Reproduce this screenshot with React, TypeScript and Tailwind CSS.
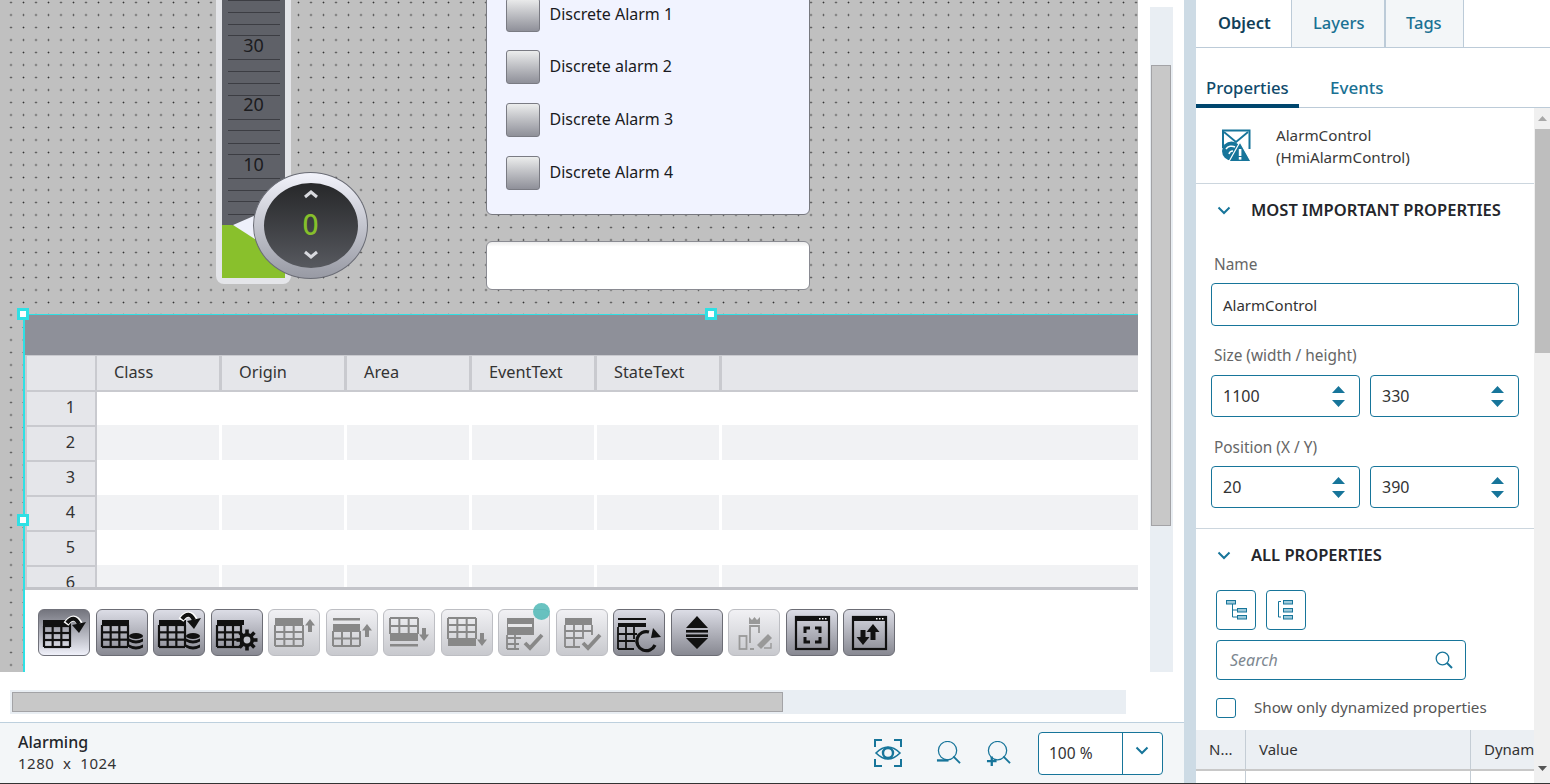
import React from "react";

const FONT = "font-['Noto_Sans','Open_Sans',sans-serif]";

function Grid({ x, y, w, h, bar, barH = 7, c = "currentColor", rows = 3, sw = 2 }: { x: number; y: number; w: number; h: number; bar?: number; barH?: number; c?: string; rows?: number; sw?: number }) {
  const lines: React.ReactNode[] = [];
  const top = y;
  for (let i = 0; i <= rows; i++) {
    const yy = top + (h * i) / rows;
    lines.push(<line key={"r" + i} x1={x} x2={x + w} y1={yy} y2={yy} stroke={c} strokeWidth={sw} />);
  }
  for (let i = 0; i <= 3; i++) {
    const xx = x + (w * i) / 3;
    lines.push(<line key={"c" + i} x1={xx} x2={xx} y1={y} y2={y + h} stroke={c} strokeWidth={sw} />);
  }
  return (
    <g>
      {lines}
      {bar !== undefined && <rect x={x} y={bar} width={w} height={barH} fill={c} />}
    </g>
  );
}

function Db({ x, y, c = "currentColor" }: { x: number; y: number; c?: string }) {
  return (
    <g fill={c}>
      <ellipse cx={x + 7} cy={y + 3} rx={7} ry={3} />
      <path d={`M${x} ${y + 5.5} q7 4 14 0 v3 q-7 4 -14 0z`} />
      <path d={`M${x} ${y + 11.5} q7 4 14 0 v3 q-7 4 -14 0z`} />
    </g>
  );
}

function Curve() {
  return (
    <g>
      <path d="M28 15 Q36 4 42 15" fill="none" stroke="#fff" strokeWidth="6" />
      <path d="M29 14 Q36 5 41 15" fill="none" stroke="#111" strokeWidth="4" />
      <path d="M34 16 L48 13 L41 24 Z" fill="#111" />
    </g>
  );
}

function Arrow({ x, y, up, len = 13, c = "#888" }: { x: number; y: number; up?: boolean; len?: number; c?: string }) {
  return up ? (
    <path d={`M${x} ${y} l5 6.500 h-3 v${len - 6.5} h-4 v-${len - 6.5} h-3 z`} fill={c} />
  ) : (
    <path d={`M${x} ${y + len} l5 -6.500 h-3 v-${len - 6.5} h-4 v${len - 6.5} h-3 z`} fill={c} />
  );
}

const Check = ({ x = 25, y = 28 }: { x?: number; y?: number }) => (
  <path d={`M${x} ${y + 6} l5 5 l12 -13`} fill="none" stroke="#888" strokeWidth="3.8" />
);

const icons: React.ReactNode[] = [
  <g key="0"><rect x="5" y="11" width="28" height="6" fill="#111" /><Grid x={6} y={17} w={26} h={21} c="#111" sw={2.2} /><Curve /></g>,
  <g key="1"><rect x="6" y="11" width="27" height="5" fill="#111" /><Grid x={6} y={16} w={26} h={22} c="#111" sw={2.2} /><Db x={33} y={24} c="#111" /></g>,
  <g key="2"><rect x="6" y="11" width="27" height="5" fill="#111" /><Grid x={6} y={16} w={26} h={22} c="#111" sw={2.2} /><g transform="translate(0 -4)"><Curve /></g><Db x={33} y={24} c="#111" /></g>,
  <g key="3">
    <rect x="6" y="11" width="27" height="5" fill="#111" /><Grid x={6} y={16} w={24} h={22} c="#111" sw={2.2} />
    <g transform="translate(36 31)">
      {[0, 45, 90, 135].map((a) => <rect key={a} x="-1.8" y="-10.5" width="3.6" height="21" fill="#111" transform={`rotate(${a})`} />)}
      <circle r="7" fill="#111" /><circle r="3.4" fill="#c0c1c9" />
    </g>
  </g>,
  <g key="4"><Grid x={7} y={16} w={28} h={21} c="#888" /><rect x="7" y="9" width="28" height="7" fill="#888" /><Arrow x={42} y={10} up /></g>,
  <g key="5"><rect x="7" y="9" width="27" height="2.500" fill="#888" /><Grid x={7} y={22} w={27} h={15} rows={2} c="#888" /><rect x="7" y="15" width="27" height="7" fill="#888" /><Arrow x={41} y={15} up /></g>,
  <g key="6"><Grid x={7} y={9} w={28} h={16} rows={2} c="#888" /><rect x="7" y="25" width="28" height="7" fill="#888" /><rect x="7" y="35" width="28" height="2.500" fill="#888" /><Arrow x={41} y={19} /></g>,
  <g key="7"><Grid x={7} y={9} w={28} h={21} c="#888" /><rect x="7" y="30" width="28" height="7" fill="#888" /><Arrow x={41} y={24} /></g>,
  <g key="8"><rect x="9" y="9" width="27" height="17" fill="#888" /><rect x="10" y="15" width="24" height="3" fill="#e8e8ea" /><path d="M9 29 H23 M9 35 H21 M9 40 H21 M9 26 V40 M17 26 V40" stroke="#888" strokeWidth="1.8" /><Check x={27} y={28} /></g>,
  <g key="9"><rect x="9" y="9" width="27" height="7" fill="#888" /><path d="M9 16 V38 M18 16 V38 M27 16 V30 M36 16 V26 M9 22 H36 M9 29 H26 M9 38 H24" stroke="#888" strokeWidth="1.8" /><Check x={27} y={28} /></g>,
  <g key="10"><rect x="5" y="9" width="28" height="2" fill="#111" /><rect x="5" y="14" width="28" height="4" fill="#111" /><path d="M5 18 V40 M13 18 V40 M21 18 V30 M5 25 H24 M5 32 H22 M5 40 H21" stroke="#111" strokeWidth="1.8" /><path d="M42 36 A 9.5 9.5 0 1 1 36 23" fill="none" stroke="#111" strokeWidth="3.2" /><path d="M38 20 L46 29 L36 30 Z" fill="#111" transform="translate(2 -1)" /></g>,
  <g key="11"><path d="M26 7 L37 19 H15 Z M26 40 L37 29 H15 Z" fill="#111" /><rect x="15" y="21" width="22" height="2.6" fill="#111" /><rect x="15" y="25.4" width="22" height="2.6" fill="#111" /></g>,
  <g key="12"><rect x="11.5" y="27" width="7" height="13" fill="none" stroke="#999" strokeWidth="1.8" /><path d="M22 34 V17 H31 V24 M22 40 H26" fill="none" stroke="#999" strokeWidth="1.8" /><path d="M21 15 V8 L24 11 L26.500 8 L29 11 L32 8 V15 Z" fill="#999" /><path d="M29 36 L40 25 L44 29 L33 40 Z" fill="#999" /><path d="M36 39 H43 V34" fill="none" stroke="#999" strokeWidth="1.4" /></g>,
  <g key="13"><rect x="10" y="8" width="33" height="32" fill="none" stroke="#111" strokeWidth="2.2" /><rect x="10" y="8" width="33" height="4" fill="#111" /><g fill="#fff"><rect x="33" y="9" width="1.5" height="1.5" /><rect x="36" y="9" width="1.500" height="1.5" /><rect x="39" y="9" width="1.5" height="1.5" /></g><path d="M19 24 V19 H24 M29 19 H34 V24 M34 28 V33 H29 M24 33 H19 V28" fill="none" stroke="#111" strokeWidth="3" /></g>,
  <g key="14"><rect x="10" y="8" width="33" height="32" fill="none" stroke="#111" strokeWidth="2.2" /><rect x="10" y="8" width="33" height="4" fill="#111" /><g fill="#fff"><rect x="33" y="9" width="1.5" height="1.5" /><rect x="36" y="9" width="1.5" height="1.5" /><rect x="39" y="9" width="1.5" height="1.5" /></g><path d="M30 15 l6.500 8 h-4 v8 h-5 v-8 h-4 z" fill="#111" /><path d="M20 36 l-6.500 -8 h4 v-7 h5 v7 h4 z" fill="#111" /></g>,
];

const kinds = ["active", "dark", "dark", "dark", "off", "off", "off", "off", "off", "off", "dark", "dark", "off", "dark", "dark"];

function ToolButton({ kind, children }: { kind: string; children: React.ReactNode }) {
  const cls =
    kind === "active"
      ? "bg-linear-to-b from-[#74757e] to-[#f0f1fa] border-[#70717a]"
      : kind === "dark"
        ? "bg-linear-to-b from-[#dcdde6] to-[#888992] border-[#6c6d75]"
        : "bg-linear-to-b from-[#f1f1f4] to-[#c8c9ce] border-[#bdbec3]";
  return (
    <div className={`w-[52px] h-[47px] shrink-0 rounded-[6px] border ${cls}`}>
      <svg width="50" height="45" viewBox="1 1 50 45">{children}</svg>
    </div>
  );
}

const HEAD = "h-full flex items-center pb-[1px] border-r-[3px] border-[#c9cacf] bg-[#e5e6ea] text-[16.3px] text-[#333] pl-[17px] w-[125px] shrink-0";

function Row({ n, shade, h }: { n: number; shade: boolean; h: string }) {
  return (
    <div className={`flex shrink-0 ${h} bg-white`}>
      <div className={`w-[70px] shrink-0 flex items-center justify-end pr-[20px] pb-[3px] bg-[#e5e6ea] border-r-[2px] border-[#c9cacf] text-[16.3px] text-[#333] ${n > 1 ? "border-t-[2px]" : ""}`}>{n}</div>
      {[0, 1, 2, 3, 4].map((i) => (
        <div key={i} className={`w-[122px] shrink-0 mr-[3px] ${shade ? "bg-[#f1f2f4]" : "bg-white"}`} />
      ))}
      <div className={`flex-1 ${shade ? "bg-[#f1f2f4]" : "bg-white"}`} />
    </div>
  );
}

function AlarmControl() {
  return (
    <div className="absolute left-[23px] top-[314px] w-[1400px] h-[358px] border-l-2 border-t border-[#2fe0e4] bg-white flex flex-col">
      <div className="h-[40px] shrink-0 bg-[#8e9099]" />
      <div className="h-[232px] shrink-0 overflow-hidden border-l-[2px] border-[#c9cacf] border-t-[1px] flex flex-col">
        <div className="flex h-[36px] shrink-0 border-b-[2px] border-[#c9cacf] bg-[#e5e6ea]">
          <div className="w-[70px] shrink-0 border-r-[2px] border-[#c9cacf]" />
          {["Class", "Origin", "Area", "EventText", "StateText"].map((t) => (
            <div key={t} className={HEAD}>{t}</div>
          ))}
        </div>
        <Row n={1} shade={false} h="h-[33px]" />
        <Row n={2} shade h="h-[35px]" />
        <Row n={3} shade={false} h="h-[35px]" />
        <Row n={4} shade h="h-[35px]" />
        <Row n={5} shade={false} h="h-[35px]" />
        <Row n={6} shade h="h-[35px]" />
      </div>
      <div className="h-[3px] shrink-0 bg-[#c3c4c9]" />
      <div className="flex-1 flex items-start gap-[5.5px] pl-[13px] pt-[19px] bg-white">
        {icons.map((ic, i) => (
          <ToolButton key={i} kind={kinds[i]}>{ic}</ToolButton>
        ))}
      </div>
      <div className="absolute left-[-8px] top-[-7px] w-[12px] h-[12px] bg-white border-[3px] border-[#2fe0e4]" />
      <div className="absolute left-[680px] top-[-7px] w-[12px] h-[12px] bg-white border-[3px] border-[#2fe0e4]" />
      <div className="absolute left-[-8px] top-[199px] w-[12px] h-[12px] bg-white border-[3px] border-[#2fe0e4]" />
      <div className="absolute left-[508px] top-[288px] w-[17px] h-[17px] rounded-full bg-[#4fb9b6]/85" />
    </div>
  );
}

function Gauge() {
  const ticks = [0, 12, 24, 35, 59, 71, 83, 95, 119, 130, 143, 154, 178, 190, 201, 214];
  return (
    <>
      <div className="absolute left-[216px] top-[-10px] w-[75px] h-[294px] border-[6px] border-[#e4e5e9] rounded-b-[8px] bg-[#5f6168]">
        <svg className="absolute inset-0" width="63" height="282" viewBox="222 -4 63 282">
          {ticks.map((y) => <line key={y} x1="228" x2="280" y1={y + 0.5} y2={y + 0.5} stroke="#3c3d43" strokeWidth="1" />)}
          <path d="M222 225 L232 225 Q262 232 285 264 L285 278 L222 278 Z" fill="#89c02c" />
          <path d="M233 225 L258 214 L258 241 Z" fill="#eef0fb" />
        </svg>
        <span className="absolute left-0 w-[63px] text-center top-[37px] text-[18px] leading-[24px] text-[#1c1c1f]">30</span>
        <span className="absolute left-0 w-[63px] text-center top-[96px] text-[18px] leading-[24px] text-[#1c1c1f]">20</span>
        <span className="absolute left-0 w-[63px] text-center top-[156px] text-[18px] leading-[24px] text-[#1c1c1f]">10</span>
      </div>
      <div className="absolute left-[253px] top-[172px] w-[115px] h-[107px] rounded-[50%] border border-[#6a6c75] bg-linear-to-b from-[#f2f3fb] to-[#989aa4] flex items-center justify-center">
        <div className="w-[94px] h-[85px] rounded-[50%] bg-linear-to-b from-[#27282a] to-[#57595f] flex flex-col items-center justify-between pt-[6px] pb-[8px]">
          <svg width="16" height="10" viewBox="0 0 16 10"><path d="M2 8 L8 3 L14 8" fill="none" stroke="#d8d9de" strokeWidth="3" /></svg>
          <span className="text-[28px] leading-[30px] font-medium text-[#86bf2b] -mt-[1px]">0</span>
          <svg width="16" height="10" viewBox="0 0 16 10"><path d="M2 2 L8 7 L14 2" fill="none" stroke="#d8d9de" strokeWidth="3" /></svg>
        </div>
      </div>
    </>
  );
}

function Alarms() {
  return (
    <>
      <div className="absolute left-[486px] top-[-20px] w-[324px] h-[235px] bg-[#f1f3ff] border border-[#77787f] rounded-b-[6px] pl-[19px] pt-[16.5px] flex flex-col gap-[18.7px]">
        {["Discrete Alarm 1", "Discrete alarm 2", "Discrete Alarm 3", "Discrete Alarm 4"].map((t) => (
          <div key={t} className="flex items-center gap-[9.5px] h-[34px]">
            <div className="w-[34px] h-[34px] rounded-[3px] border border-[#7a7b83] bg-linear-to-b from-[#eceded] to-[#8f9099]" />
            <span className="text-[16px] text-[#1a1a22] -mt-[1.5px]">{t}</span>
          </div>
        ))}
      </div>
      <div className="absolute left-[486px] top-[241px] w-[324px] h-[49px] rounded-[6px] border border-[#8a8b92] bg-linear-to-b from-[#ececec] via-white via-10% to-white" />
    </>
  );
}

const Chevron = ({ cls = "" }: { cls?: string }) => (
  <svg className={cls} width="14" height="9" viewBox="0 0 14 9"><path d="M1.500 1.500 L7 7 L12.500 1.500" fill="none" stroke="#17759a" strokeWidth="2" /></svg>
);

const INPUT = "border border-[#17759a] rounded-[4px] bg-white flex items-center";
const LABEL = "pl-[3px] h-[22px] text-[15.4px] leading-[22px] text-[#666]";

function Stepper({ value }: { value: string }) {
  return (
    <div className={`${INPUT} w-[149px] h-[42px] pl-[11px] pr-[14px] justify-between text-[16px] text-[#333]`}>
      <span>{value}</span>
      <svg width="13" height="21" viewBox="0 0 13 21"><path d="M6.500 0 L13 7 H0 Z M6.500 21 L13 14 H0 Z" fill="#17759a" /></svg>
    </div>
  );
}

function RightPanel() {
  return (
    <div className="w-[354px] shrink-0 h-full flex flex-col bg-white overflow-hidden">
      <div className="h-[48px] shrink-0 flex border-b border-[#bccbd8]">
        <div className="w-[96px] flex items-center pl-[22px] text-[16.5px] font-semibold text-[#123f59] bg-white border-r border-[#bccbd8]">Object</div>
        <div className="w-[94px] flex items-center pl-[21px] text-[16.5px] font-medium text-[#1a7193] bg-[#f3f6f8] border-r-2 border-[#bccbd8]">Layers</div>
        <div className="w-[78px] flex items-center pl-[20px] text-[16.5px] font-medium text-[#1a7193] bg-[#f3f6f8] border-r border-[#bccbd8]">Tags</div>
      </div>
      <div className="h-[60px] shrink-0 flex items-end border-b border-[#bccbd8]">
        <div className="w-[103px] h-[35px] pl-[10px] pt-[3px] text-[16.7px] font-medium text-[#0f4a6b] border-b-4 border-[#00466e] -mb-px leading-[24px]">Properties</div>
        <div className="h-[35px] pl-[31px] pt-[4px] text-[17px] font-medium text-[#1a7193] leading-[24px]">Events</div>
      </div>
      <div className="flex-1 flex min-h-0">
        <div className="w-[338px] shrink-0 flex flex-col overflow-hidden">
          <div className="h-[76px] shrink-0 border-b border-[#ccd6de] flex items-center pl-[26px]">
            <svg width="29" height="33" viewBox="0 0 29 33">
              <path d="M1 19 V1.500 H27.500 V20" fill="none" stroke="#17759a" strokeWidth="2" />
              <path d="M2 3 L14 13 L26 3" fill="none" stroke="#17759a" strokeWidth="1.800" />
              <circle cx="9.500" cy="22" r="9.500" fill="#17759a" />
              <path d="M4 20 a7 7 0 0 1 9 -2 M7 25 a4 4 0 0 1 4 -3" fill="none" stroke="#fff" strokeWidth="1.500" />
              <path d="M18 13 L29 32.500 H7 Z" fill="#17759a" stroke="#fff" strokeWidth="1.200" />
              <rect x="16.800" y="20" width="2.600" height="7" fill="#fff" /><rect x="16.800" y="28" width="2.600" height="2.600" fill="#fff" />
            </svg>
            <div className="ml-[25px] text-[15.200px] leading-[22px] text-[#3a3a3a]">AlarmControl<br />(HmiAlarmControl)</div>
          </div>
          <div className="flex items-center h-[52px] pl-[21px] shrink-0">
            <Chevron />
            <span className="ml-[20px] text-[16.5px] font-semibold text-[#24262b]">MOST IMPORTANT PROPERTIES</span>
          </div>
          <div className="pl-[15px] flex flex-col shrink-0">
            <div className={`${LABEL} mt-[18px]`}>Name</div>
            <div className={`${INPUT} w-[308px] h-[43px] mt-[7px] pl-[11px] pt-px text-[15px] text-[#333]`}>AlarmControl</div>
            <div className={`${LABEL} mt-[19px]`}>Size (width / height)</div>
            <div className="flex gap-[10px] mt-[8px]"><Stepper value="1100" /><Stepper value="330" /></div>
            <div className={`${LABEL} mt-[20px]`}>Position (X / Y)</div>
            <div className="flex gap-[10px] mt-[7px]"><Stepper value="20" /><Stepper value="390" /></div>
          </div>
          <div className="h-px bg-[#ccd6de] mt-[20px] shrink-0" />
          <div className="flex items-center h-[52px] pl-[21px] shrink-0">
            <Chevron />
            <span className="ml-[20px] text-[16.5px] font-semibold text-[#24262b]">ALL PROPERTIES</span>
          </div>
          <div className="pl-[20px] flex gap-[10px] mt-[9px] shrink-0">
            <div className="w-[40px] h-[40px] border border-[#17759a] rounded-[4px]">
              <svg width="38" height="38" viewBox="0 0 38 38"><g fill="#9ecadb" stroke="#17759a" strokeWidth="1"><rect x="9.500" y="9.500" width="9" height="3.500" /><rect x="20.500" y="17.500" width="9" height="3.500" /><rect x="20.500" y="24.500" width="9" height="3.500" /></g><path d="M15.500 13 V26 H20 M15.500 19 H20" fill="none" stroke="#17759a" /></svg>
            </div>
            <div className="w-[40px] h-[40px] border border-[#17759a] rounded-[4px]">
              <svg width="38" height="38" viewBox="0 0 38 38"><g fill="#9ecadb" stroke="#17759a" strokeWidth="1"><rect x="16.500" y="9.500" width="9" height="3.500" /><rect x="16.500" y="17.500" width="9" height="3.500" /><rect x="16.500" y="24.500" width="9" height="3.500" /></g><path d="M14 10.500 H11.500 V26 H14" fill="none" stroke="#17759a" /></svg>
            </div>
          </div>
          <div className={`${INPUT} ml-[20px] mt-[10px] w-[250px] h-[40px] shrink-0 pl-[13px] pr-[12px] justify-between`}>
            <span className="text-[16px] italic text-[#7d8790]">Search</span>
            <svg width="18" height="18" viewBox="0 0 18 18"><circle cx="7.500" cy="7.500" r="6.300" fill="none" stroke="#17759a" strokeWidth="1.3" /><path d="M12 12 L17 17" stroke="#17759a" strokeWidth="2" /></svg>
          </div>
          <div className="ml-[20px] mt-[18px] flex items-center shrink-0 h-[20px]">
            <div className="w-[20px] h-[20px] border border-[#17759a] rounded-[3px]" />
            <span className="ml-[18px] text-[15.2px] text-[#555] -mt-[2px]">Show only dynamized properties</span>
          </div>
          <div className="mt-[12px] h-[41px] shrink-0 flex bg-[#ebeff3] border-b-[2px] border-[#c8c8c8] text-[15px] text-[#333] overflow-hidden">
            <div className="w-[50px] shrink-0 pl-[13px] flex items-center border-r border-[#c4cdd5]">N...</div>
            <div className="w-[225px] shrink-0 pl-[13px] flex items-center border-r border-[#c4cdd5]">Value</div>
            <div className="w-[63px] shrink-0 pl-[13px] flex items-center whitespace-nowrap overflow-hidden">Dynam</div>
          </div>
          <div className="flex-1 flex">
            <div className="w-[50px] border-r border-[#c4cdd5]" />
            <div className="w-[225px] border-r border-[#c4cdd5]" />
          </div>
        </div>
        <div className="w-[16px] shrink-0 bg-[#f0f0f0] flex flex-col items-center">
          <div className="h-[21px] shrink-0 flex items-center justify-center">
            <svg width="9" height="5" viewBox="0 0 9 5"><path d="M4.500 0 L9 5 H0 Z" fill="#a8a8a8" /></svg>
          </div>
          <div className="w-[15px] h-[224px] shrink-0 ml-px bg-[#bebebe]" />
          <div className="mt-auto h-[25px] shrink-0 flex items-center justify-center pb-[4px]">
            <svg width="9" height="5" viewBox="0 0 9 5"><path d="M4.500 5 L9 0 H0 Z" fill="#555" /></svg>
          </div>
        </div>
      </div>
    </div>
  );
}

function StatusBar() {
  return (
    <div className="h-[61px] shrink-0 mt-[8px] border-t border-[#bdd0de] bg-[#f3f6f8] flex items-center">
      <div className="pl-[18px] w-[860px] shrink-0 pb-[3px]">
        <div className="text-[16px] font-medium leading-[22px] text-[#24262b]">Alarming</div>
        <div className="text-[15px] leading-[20px] tracking-[0.5px] text-[#333] whitespace-pre">1280  x  1024</div>
      </div>
      <svg className="ml-[14px]" width="28" height="28" viewBox="0 0 28 28">
        <path d="M1 8 V1 H8 M20 1 H27 V8 M27 20 V27 H20 M8 27 H1 V20" fill="none" stroke="#17759a" strokeWidth="2" />
        <path d="M2 14 Q14 2 26 14 Q14 26 2 14 Z" fill="none" stroke="#17759a" strokeWidth="1.600" />
        <circle cx="14" cy="14" r="5" fill="none" stroke="#17759a" strokeWidth="2.4" />
      </svg>
      <svg className="ml-[34px]" width="25" height="25" viewBox="0 0 26 26">
        <circle cx="12" cy="10" r="9.500" fill="none" stroke="#17759a" strokeWidth="1.300" />
        <path d="M18 16 L25 23" stroke="#17759a" strokeWidth="2" />
        <rect x="1" y="19" width="12" height="2.400" fill="#17759a" />
      </svg>
      <svg className="ml-[25px]" width="25" height="25" viewBox="0 0 26 26">
        <circle cx="12" cy="10" r="9.500" fill="none" stroke="#17759a" strokeWidth="1.300" />
        <path d="M18 16 L25 23" stroke="#17759a" strokeWidth="2" />
        <path d="M1 21 H11 M6 16 V26" stroke="#17759a" strokeWidth="2.400" />
      </svg>
      <div className="ml-[27px] w-[125px] h-[43px] border border-[#17759a] rounded-[4px] bg-white flex">
        <div className="w-[84px] border-r border-[#17759a] pl-[10px] pt-[1px] flex items-center text-[15.5px] text-[#333]">100 %</div>
        <div className="flex-1 flex items-start justify-center pt-[13px] pr-[2px]"><Chevron /></div>
      </div>
    </div>
  );
}

export default function App() {
  return (
    <div className={`${FONT} w-[1550px] h-[784px] overflow-hidden flex border-b border-[#333] bg-white`}>
      <div className="w-[1184px] shrink-0 h-full flex flex-col">
        <div className="flex h-[672px] shrink-0">
          <div className="relative w-[1138px] h-full shrink-0 overflow-hidden bg-[#c0c0c0] bg-[radial-gradient(circle,#333_0.7px,transparent_1.1px)] bg-[size:12.5px_12.5px] bg-[position:4.75px_-3.75px]">
            <Gauge />
            <Alarms />
            <AlarmControl />
          </div>
          <div className="ml-[12px] mt-[7px] w-[23px] h-[665px] shrink-0 bg-[#e9eef3] pl-px pt-[58px]">
            <div className="w-[20px] h-[461px] bg-[#c8c8c8] border border-[#a3a3a6]" />
          </div>
        </div>
        <div className="ml-[10px] mt-[18px] w-[1116px] h-[24px] shrink-0 bg-[#e9eef3] pl-[2px] pt-[2px]">
          <div className="w-[771px] h-[20px] bg-[#c8c8c8] border border-[#a3a3a6]" />
        </div>
        <StatusBar />
      </div>
      <div className="w-[12px] shrink-0 h-full bg-[#cddbe5]" />
      <RightPanel />
    </div>
  );
}
